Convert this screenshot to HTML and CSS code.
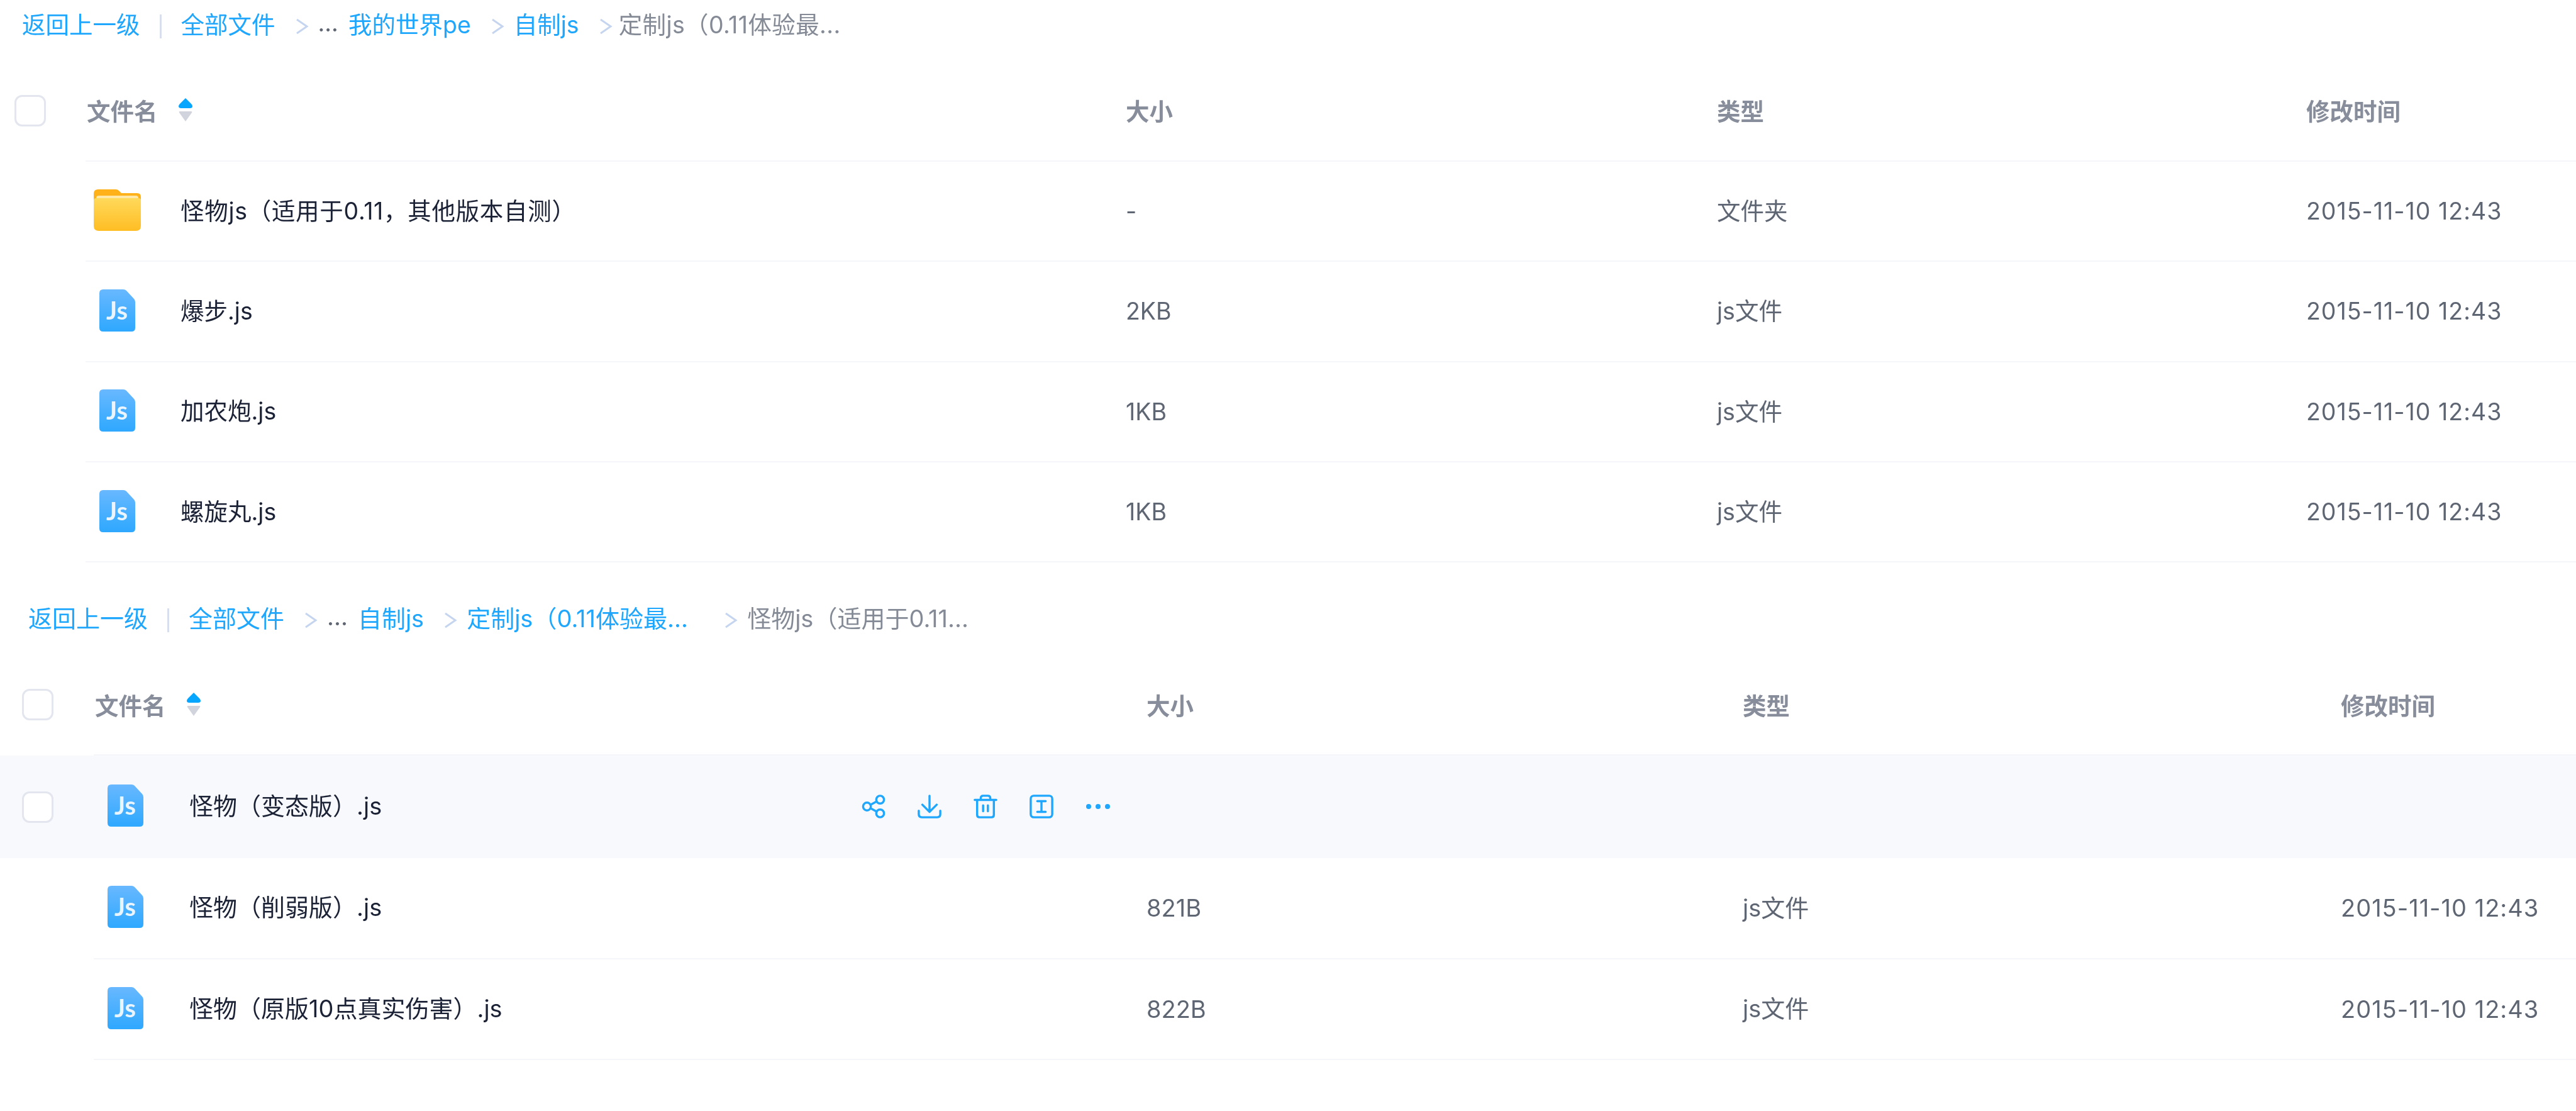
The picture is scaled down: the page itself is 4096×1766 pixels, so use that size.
FILE: index.html
```html
<!DOCTYPE html>
<html lang="zh-CN">
<head>
<meta charset="utf-8">
<title>文件列表</title>
<link rel="stylesheet" href="styles.css">
</head>
<body>
<svg class="defs" width="0" height="0" aria-hidden="true">
  <defs>
    <linearGradient id="jsg" x1="0" y1="0" x2="0" y2="1"><stop offset="0" stop-color="#68b8ff"/><stop offset="1" stop-color="#2ea8ff"/></linearGradient>
    <linearGradient id="fg" x1="0" y1="0" x2="0" y2="1"><stop offset="0" stop-color="#ffd95a"/><stop offset="1" stop-color="#ffbd24"/></linearGradient>
    <symbol id="js" viewBox="0 0 57 67">
      <path d="M6 0H38Q41 0 43 2L55 15Q57 17 57 20V61Q57 67 51 67H6Q0 67 0 61V6Q0 0 6 0Z" fill="url(#jsg)"/>
      <text x="28" y="48" text-anchor="middle" class="js-text">Js</text>
    </symbol>
    <symbol id="folder" viewBox="0 0 75 66">
      <path d="M7 0H35Q38 0 40 2L44 6H69Q75 6 75 12V30H0V7Q0 0 7 0Z" fill="#ffb11a"/>
      <path d="M8 10H67Q71 10 71 14V20H4V14Q4 10 8 10Z" fill="#ffe7a6"/>
      <path d="M0 17Q0 14 4 14H71Q75 14 75 17V58Q75 66 67 66H8Q0 66 0 58Z" fill="url(#fg)"/>
    </symbol>
    <symbol id="sort" viewBox="0 0 22 37">
      <path d="M11 0L20 9Q22 11 22 13Q22 16 18 16H4Q0 16 0 13Q0 11 2 9Z" fill="#06a6ff"/>
      <path d="M2 21H20Q22 21 21 23L11 37L1 23Q0 21 2 21Z" fill="#d1d4dd"/>
    </symbol>
  </defs>
</svg>

<section class="panel panel-a">
  <nav class="crumbs">
    <a class="link">返回上一级</a><i class="bar"></i><a class="link">全部文件</a>
    <svg class="chev" viewBox="0 0 22 26"><path d="M3 2L19 13L3 24"/></svg><span class="more">...</span><a class="link">我的世界pe</a>
    <svg class="chev" viewBox="0 0 22 26"><path d="M3 2L19 13L3 24"/></svg><a class="link">自制js</a>
    <svg class="chev" viewBox="0 0 22 26"><path d="M3 2L19 13L3 24"/></svg><span class="current">定制js（0.11体验最...</span>
  </nav>
  <div class="row head">
    <div class="check-col"><span class="check"></span></div>
    <div class="cells">
      <div class="title">文件名<svg class="sort"><use href="#sort"/></svg></div><div>大小</div><div>类型</div><div>修改时间</div>
    </div>
  </div>
  <div class="row">
    <div class="check-col"></div>
    <div class="cells">
      <div class="name"><span class="slot"><svg class="ic-folder"><use href="#folder"/></svg></span><span class="label spaced">怪物js（适用于0.11，其他版本自测）</span></div><div>-</div><div class="tx">文件夹</div><div class="date">2015-11-10 12:43</div>
    </div>
  </div>
  <div class="row">
    <div class="check-col"></div>
    <div class="cells">
      <div class="name"><span class="slot"><svg class="ic-js"><use href="#js"/></svg></span><span class="label">爆步.js</span></div><div>2KB</div><div class="tx">js文件</div><div class="date">2015-11-10 12:43</div>
    </div>
  </div>
  <div class="row">
    <div class="check-col"></div>
    <div class="cells">
      <div class="name"><span class="slot"><svg class="ic-js"><use href="#js"/></svg></span><span class="label">加农炮.js</span></div><div>1KB</div><div class="tx">js文件</div><div class="date">2015-11-10 12:43</div>
    </div>
  </div>
  <div class="row">
    <div class="check-col"></div>
    <div class="cells">
      <div class="name"><span class="slot"><svg class="ic-js"><use href="#js"/></svg></span><span class="label">螺旋丸.js</span></div><div>1KB</div><div class="tx">js文件</div><div class="date">2015-11-10 12:43</div>
    </div>
  </div>
</section>

<section class="panel panel-b">
  <nav class="crumbs">
    <a class="link">返回上一级</a><i class="bar"></i><a class="link">全部文件</a>
    <svg class="chev" viewBox="0 0 22 26"><path d="M3 2L19 13L3 24"/></svg><span class="more">...</span><a class="link">自制js</a>
    <svg class="chev" viewBox="0 0 22 26"><path d="M3 2L19 13L3 24"/></svg><a class="link wide">定制js（0.11体验最...</a>
    <svg class="chev" viewBox="0 0 22 26"><path d="M3 2L19 13L3 24"/></svg><span class="current">怪物js（适用于0.11...</span>
  </nav>
  <div class="row head">
    <div class="check-col"><span class="check"></span></div>
    <div class="cells">
      <div class="title">文件名<svg class="sort"><use href="#sort"/></svg></div><div>大小</div><div>类型</div><div>修改时间</div>
    </div>
  </div>
  <div class="row hover">
    <div class="check-col"><span class="check"></span></div>
    <div class="cells">
      <div class="name"><span class="slot"><svg class="ic-js"><use href="#js"/></svg></span><span class="label">怪物（变态版）.js</span>
        <div class="actions">
          <svg viewBox="0 0 40 40"><circle cx="9" cy="20" r="6.5"/><circle cx="31" cy="8.5" r="6.5"/><circle cx="31" cy="31.5" r="6.5"/><path d="M15 17L25 11.5M15 23L25 28.5"/></svg>
          <svg viewBox="0 0 40 40"><path d="M20 2V29M8 17L20 29L32 17M2 27V33Q2 38 7 38H33Q38 38 38 33V27"/></svg>
          <svg viewBox="0 0 40 40"><path d="M2 9H38M12 9V6Q12 2 16 2H24Q28 2 28 6V9M6 9V34Q6 38 10 38H30Q34 38 34 34V9M16 18V28M24 18V28"/></svg>
          <svg viewBox="0 0 40 40"><rect x="2" y="2" width="36" height="36" rx="5"/><path d="M13 11H27M13 29H27M20 11V29"/></svg>
          <svg class="dots" viewBox="0 0 40 10"><circle cx="5" cy="5" r="4"/><circle cx="20" cy="5" r="4"/><circle cx="35" cy="5" r="4"/></svg>
        </div>
      </div><div></div><div></div><div></div>
    </div>
  </div>
  <div class="row">
    <div class="check-col"></div>
    <div class="cells">
      <div class="name"><span class="slot"><svg class="ic-js"><use href="#js"/></svg></span><span class="label">怪物（削弱版）.js</span></div><div>821B</div><div class="tx">js文件</div><div class="date">2015-11-10 12:43</div>
    </div>
  </div>
  <div class="row">
    <div class="check-col"></div>
    <div class="cells">
      <div class="name"><span class="slot"><svg class="ic-js"><use href="#js"/></svg></span><span class="label">怪物（原版10点真实伤害）.js</span></div><div>822B</div><div class="tx">js文件</div><div class="date">2015-11-10 12:43</div>
    </div>
  </div>
</section>
</body>
</html>
```

FILE: styles.css
```css
* { box-sizing: border-box; }
html, body { margin: 0; background: #fff; }
body {
  width: 4096px;
  height: 1766px;
  overflow: hidden;
  font-family: Inter, "Noto Sans CJK SC", sans-serif;
  color: #5f6673;
  filter: blur(0.7px);
}
.defs { position: absolute; }
.js-text { font: 700 40px Lato, sans-serif; fill: #eaf5ff; }

.panel-a { font-size: 37.5px; margin-bottom: 50px; }
.panel-b { font-size: 38px; }

.crumbs { height: 76px; padding-bottom: 4px; display: flex; align-items: center; white-space: nowrap; }
.panel-a .crumbs { padding-left: 35px; }
.panel-b .crumbs { padding-left: 45px; }
.link { color: #1ea7fd; }
.current { color: #858b96; }
.panel-a .current { margin-left: -5px; letter-spacing: 0.4px; }
.more { color: #5f6673; margin-right: 16px; }
.bar { width: 3px; height: 38px; margin: 11px 31px 0; background: #d8deee; }
.chev { width: 22px; height: 26px; margin: 12px 15px 0 31px; fill: none; stroke: #c5d5ef; stroke-width: 3px; flex: none; }
.wide { width: 378px; }

.row { display: flex; align-items: stretch; }
.cells { flex: 1; display: grid; align-items: center; border-bottom: 2px solid #f4f6f9; }
.panel-a .row { height: 159.3px; }
.panel-b .row { height: 160.5px; }
.panel-a .cells { grid-template-columns: 1654px 940px 937px 1fr; }
.panel-b .cells { grid-template-columns: 1674px 948px 951px 1fr; }
.panel-a .check-col { width: 136px; padding-left: 23px; }
.panel-b .check-col { width: 149px; padding-left: 35px; }
.check-col { display: flex; align-items: center; }
.check { display: block; width: 50px; height: 50px; border: 3px solid #e4e6ef; border-radius: 12px; background: #fff; }

.panel-a .row.head { height: 162px; margin-top: 19px; font-weight: 600; font-size: 37.5px; color: #878d9a; }
.panel-b .row.head { height: 162px; margin-top: 19px; font-weight: 600; font-size: 37.5px; color: #878d9a; }
.panel-a .row.head .cells > * { padding-bottom: 2px; }
.title { display: flex; align-items: center; padding-left: 2px; }
.sort { width: 22px; height: 37px; margin-left: 33px; }

.panel-b .row.hover { height: 163px; background: #f8f9fc; }
.hover .cells { border-bottom-color: transparent; }

.name { display: flex; align-items: center; color: #1c2236; padding-bottom: 3px; }
.label { padding-bottom: 4px; }
.spaced { letter-spacing: 0.7px; }
.tx { padding-bottom: 6px; }
.date { letter-spacing: 1px; }
.slot { width: 101px; margin-right: 50px; display: flex; justify-content: center; flex: none; }
.panel-b .slot { margin-right: 51px; }
.ic-folder { width: 75px; height: 66px; }
.ic-js { width: 57px; height: 67px; }

.actions { margin-left: auto; margin-right: 57px; margin-top: 3px; display: flex; align-items: center; gap: 51px; }
.actions svg { width: 38px; height: 38px; fill: none; stroke: #1ea7fd; stroke-width: 3.6px; stroke-linecap: round; stroke-linejoin: round; }
.actions .dots { width: 40px; height: 10px; fill: #1ea7fd; stroke: none; }
```
